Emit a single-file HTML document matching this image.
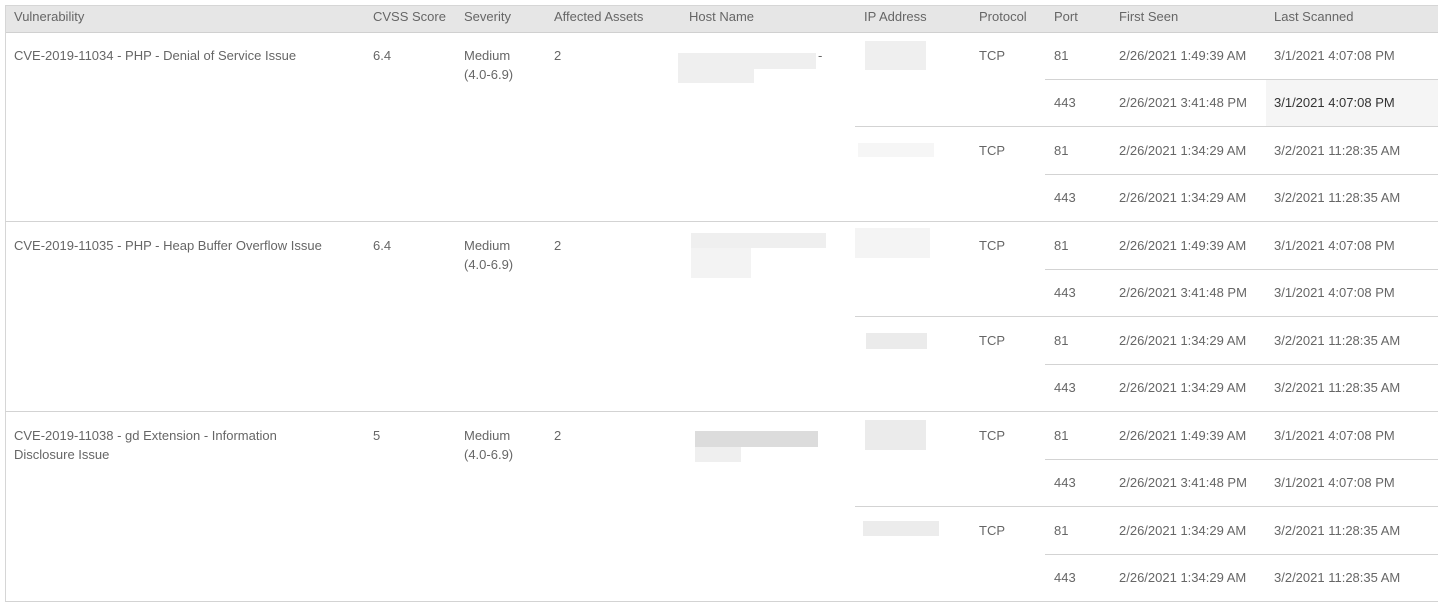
<!DOCTYPE html>
<html><head><meta charset="utf-8"><style>
body{margin:0;width:1438px;height:602px;background:#fff;position:relative;overflow:hidden;font-family:"Liberation Sans",sans-serif;font-size:13px;color:#666}
.a{position:absolute;white-space:nowrap;line-height:19px}
.h{position:absolute;left:5px;top:5px;right:0;height:26px;background:#e6e6e6;border-top:1px solid #d6d6d6;border-bottom:1px solid #d0d0d0}
.l{position:absolute;height:1px;background:#d3d3d3;right:0}
.b{position:absolute;background:#efefef}
</style></head><body>
<div class="h"></div>
<div style="position:absolute;left:5px;top:5px;width:1px;bottom:0;background:#d6d6d6"></div>
<div style="position:absolute;left:1266px;top:80px;width:172px;height:46px;background:#f5f5f5"></div>

<div class="a" style="top:7px;left:14px">Vulnerability</div>
<div class="a" style="top:7px;left:373px">CVSS Score</div>
<div class="a" style="top:7px;left:464px">Severity</div>
<div class="a" style="top:7px;left:554px">Affected Assets</div>
<div class="a" style="top:7px;left:689px">Host Name</div>
<div class="a" style="top:7px;left:864px">IP Address</div>
<div class="a" style="top:7px;left:979px">Protocol</div>
<div class="a" style="top:7px;left:1054px">Port</div>
<div class="a" style="top:7px;left:1119px">First Seen</div>
<div class="a" style="top:7px;left:1274px">Last Scanned</div>

<!-- group 1 -->
<div class="l" style="top:79px;left:1045px"></div>
<div class="l" style="top:126px;left:855px"></div>
<div class="l" style="top:174px;left:1045px"></div>
<div class="l" style="top:221px;left:5px"></div>
<div class="a" style="top:46px;left:14px">CVE-2019-11034 - PHP - Denial of Service Issue</div>
<div class="a" style="top:46px;left:373px">6.4</div>
<div class="a" style="top:46px;left:464px">Medium<br>(4.0-6.9)</div>
<div class="a" style="top:46px;left:554px">2</div>
<div class="b" style="top:53px;left:678px;width:138px;height:16px"></div>
<div class="b" style="top:69px;left:678px;width:76px;height:14px"></div>
<div class="a" style="top:46px;left:818px">-</div>
<div class="b" style="top:41px;left:865px;width:61px;height:29px"></div>
<div class="b" style="top:143px;left:858px;width:76px;height:14px;background:#f6f6f6"></div>
<div class="a" style="top:46px;left:979px">TCP</div>
<div class="a" style="top:141px;left:979px">TCP</div>
<div class="a" style="top:46px;left:1054px">81</div><div class="a" style="top:46px;left:1119px">2/26/2021 1:49:39 AM</div><div class="a" style="top:46px;left:1274px">3/1/2021 4:07:08 PM</div>
<div class="a" style="top:93px;left:1054px">443</div><div class="a" style="top:93px;left:1119px">2/26/2021 3:41:48 PM</div><div class="a" style="top:93px;left:1274px;color:#333">3/1/2021 4:07:08 PM</div>
<div class="a" style="top:141px;left:1054px">81</div><div class="a" style="top:141px;left:1119px">2/26/2021 1:34:29 AM</div><div class="a" style="top:141px;left:1274px">3/2/2021 11:28:35 AM</div>
<div class="a" style="top:188px;left:1054px">443</div><div class="a" style="top:188px;left:1119px">2/26/2021 1:34:29 AM</div><div class="a" style="top:188px;left:1274px">3/2/2021 11:28:35 AM</div>

<!-- group 2 -->
<div class="l" style="top:269px;left:1045px"></div>
<div class="l" style="top:316px;left:855px"></div>
<div class="l" style="top:364px;left:1045px"></div>
<div class="l" style="top:411px;left:5px"></div>
<div class="a" style="top:236px;left:14px">CVE-2019-11035 - PHP - Heap Buffer Overflow Issue</div>
<div class="a" style="top:236px;left:373px">6.4</div>
<div class="a" style="top:236px;left:464px">Medium<br>(4.0-6.9)</div>
<div class="a" style="top:236px;left:554px">2</div>
<div class="b" style="top:233px;left:691px;width:135px;height:15px"></div>
<div class="b" style="top:248px;left:691px;width:60px;height:30px;background:#f3f3f3"></div>
<div class="b" style="top:228px;left:855px;width:75px;height:30px;background:#f4f4f4"></div>
<div class="b" style="top:333px;left:866px;width:61px;height:16px;background:#ebebeb"></div>
<div class="a" style="top:236px;left:979px">TCP</div>
<div class="a" style="top:331px;left:979px">TCP</div>
<div class="a" style="top:236px;left:1054px">81</div><div class="a" style="top:236px;left:1119px">2/26/2021 1:49:39 AM</div><div class="a" style="top:236px;left:1274px">3/1/2021 4:07:08 PM</div>
<div class="a" style="top:283px;left:1054px">443</div><div class="a" style="top:283px;left:1119px">2/26/2021 3:41:48 PM</div><div class="a" style="top:283px;left:1274px">3/1/2021 4:07:08 PM</div>
<div class="a" style="top:331px;left:1054px">81</div><div class="a" style="top:331px;left:1119px">2/26/2021 1:34:29 AM</div><div class="a" style="top:331px;left:1274px">3/2/2021 11:28:35 AM</div>
<div class="a" style="top:378px;left:1054px">443</div><div class="a" style="top:378px;left:1119px">2/26/2021 1:34:29 AM</div><div class="a" style="top:378px;left:1274px">3/2/2021 11:28:35 AM</div>

<!-- group 3 -->
<div class="l" style="top:459px;left:1045px"></div>
<div class="l" style="top:506px;left:855px"></div>
<div class="l" style="top:554px;left:1045px"></div>
<div class="l" style="top:601px;left:5px"></div>
<div class="a" style="top:426px;left:14px">CVE-2019-11038 - gd Extension - Information<br>Disclosure Issue</div>
<div class="a" style="top:426px;left:373px">5</div>
<div class="a" style="top:426px;left:464px">Medium<br>(4.0-6.9)</div>
<div class="a" style="top:426px;left:554px">2</div>
<div class="b" style="top:431px;left:695px;width:123px;height:16px;background:#dcdcdc"></div>
<div class="b" style="top:447px;left:695px;width:46px;height:15px"></div>
<div class="b" style="top:420px;left:865px;width:61px;height:30px;background:#ebebeb"></div>
<div class="b" style="top:521px;left:863px;width:76px;height:15px;background:#ececec"></div>
<div class="a" style="top:426px;left:979px">TCP</div>
<div class="a" style="top:521px;left:979px">TCP</div>
<div class="a" style="top:426px;left:1054px">81</div><div class="a" style="top:426px;left:1119px">2/26/2021 1:49:39 AM</div><div class="a" style="top:426px;left:1274px">3/1/2021 4:07:08 PM</div>
<div class="a" style="top:473px;left:1054px">443</div><div class="a" style="top:473px;left:1119px">2/26/2021 3:41:48 PM</div><div class="a" style="top:473px;left:1274px">3/1/2021 4:07:08 PM</div>
<div class="a" style="top:521px;left:1054px">81</div><div class="a" style="top:521px;left:1119px">2/26/2021 1:34:29 AM</div><div class="a" style="top:521px;left:1274px">3/2/2021 11:28:35 AM</div>
<div class="a" style="top:568px;left:1054px">443</div><div class="a" style="top:568px;left:1119px">2/26/2021 1:34:29 AM</div><div class="a" style="top:568px;left:1274px">3/2/2021 11:28:35 AM</div>
</body></html>
